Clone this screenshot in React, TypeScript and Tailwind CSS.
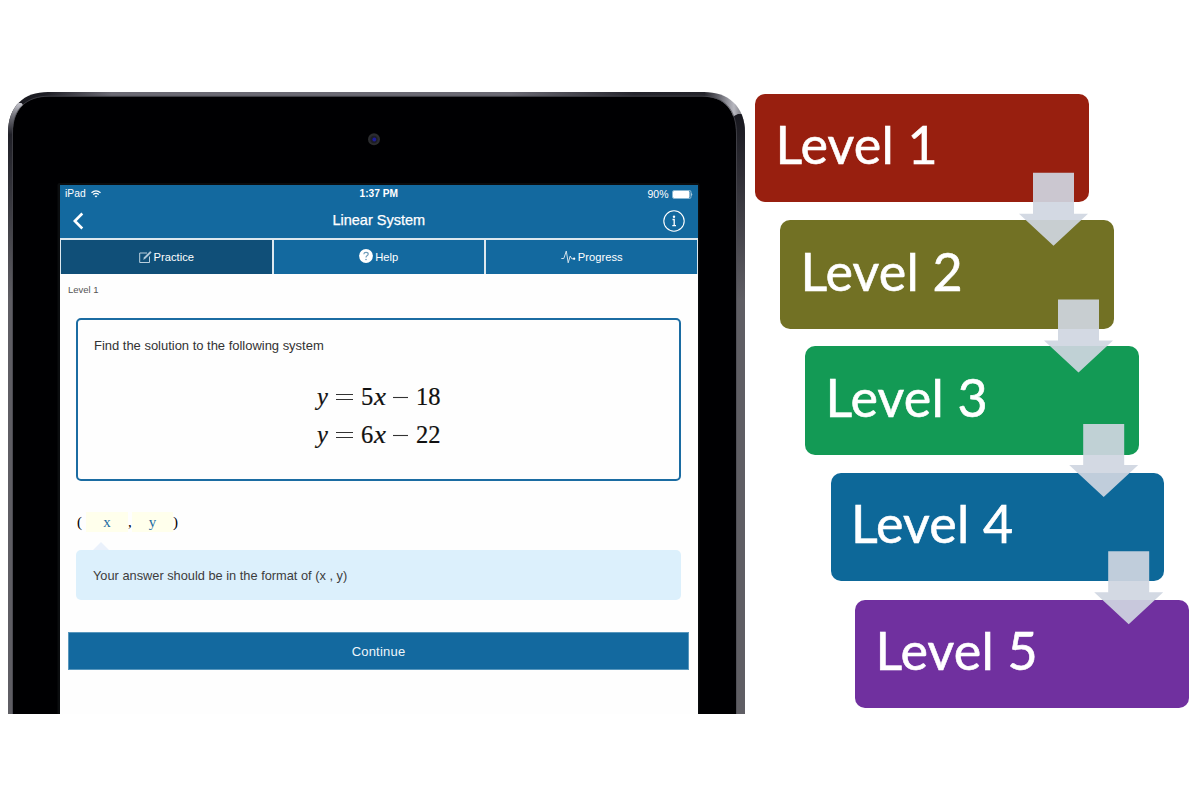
import { ReactNode } from "react";

type Level = { name: string; box: string };

const levels: Level[] = [
  { name: "Level 1", box: "bg-[#981f0f] h-[108px]" },
  { name: "Level 2", box: "bg-[#727124] ml-[25px] mt-[18px] h-[109px]" },
  { name: "Level 3", box: "bg-[#139a55] ml-[50px] mt-[17px] h-[109px]" },
  { name: "Level 4", box: "bg-[#0d6899] ml-[75.5px] mt-[18px] h-[108px]" },
  { name: "Level 5", box: "bg-[#70309f] ml-[100px] mt-[19px] h-[108px]" },
];

const arrows = [
  { x: 1053.5, y: 172.700 },
  { x: 1078.5, y: 299.5 },
  { x: 1103.700, y: 424 },
  { x: 1128.700, y: 551.300 },
];

function DeviceFrame() {
  return (
    <svg className="absolute inset-0" width="738" height="623" viewBox="8 91 738 623" aria-hidden="true">
      <defs>
        <linearGradient id="rim" x1="8" x2="745" y1="0" y2="0" gradientUnits="userSpaceOnUse">
          <stop offset="0" stopColor="#18181e" />
          <stop offset="0.05" stopColor="#1d1d24" />
          <stop offset="0.14" stopColor="#6b6a74" />
          <stop offset="0.68" stopColor="#6b6a74" />
          <stop offset="0.85" stopColor="#25252d" />
          <stop offset="0.945" stopColor="#24242b" />
          <stop offset="0.965" stopColor="#66666e" />
          <stop offset="0.985" stopColor="#b8b8c0" />
          <stop offset="1" stopColor="#66666c" />
        </linearGradient>
        <linearGradient id="leftEdge" x1="0" x2="0" y1="103" y2="300" gradientUnits="userSpaceOnUse">
          <stop offset="0" stopColor="#c8c8d0" />
          <stop offset="0.06" stopColor="#77777f" />
          <stop offset="0.16" stopColor="#202028" />
          <stop offset="0.45" stopColor="#34343b" />
          <stop offset="1" stopColor="#5f5e64" />
        </linearGradient>
        <linearGradient id="rightEdge" x1="0" x2="0" y1="114" y2="300" gradientUnits="userSpaceOnUse">
          <stop offset="0" stopColor="#17171e" />
          <stop offset="0.3" stopColor="#2d2c33" />
          <stop offset="1" stopColor="#5f5e64" />
        </linearGradient>
        <clipPath id="shell">
          <path d="M8 714V133C8 106 24 92 48 92H704C728 92 745 106 745 133V714Z" />
        </clipPath>
      </defs>
      <g clipPath="url(#shell)">
        <rect x="8" y="92" width="737" height="622" fill="url(#rim)" />
        <path d="M8 714V103H21.500L26 109V714Z" fill="url(#leftEdge)" />
        <path d="M728 714V119L738 114H745V714Z" fill="url(#rightEdge)" />
      </g>
      <path d="M12.800 714V133C12.800 108 27 96.500 49 96.500H702C724 96.500 736 110 736 134V714Z" fill="#000002" />
      <path d="M12.500 714V133C12.500 108 27 96.200 49 96.200H702C724 96.200 736.500 109 736.500 134V714" fill="none" stroke="#4a4a52" strokeWidth="0.700" />
      <rect x="57.500" y="183" width="642" height="535" rx="2" fill="#0b0d0f" />
      <circle cx="374" cy="139.300" r="6" fill="#2b2c2f" />
      <circle cx="374" cy="139.500" r="3.700" fill="#1d1d25" />
      <circle cx="374.300" cy="139.500" r="1.900" fill="#1c1c9c" />
    </svg>
  );
}

function StatusBar() {
  return (
    <div className="grid h-[18px] grid-cols-3 items-center px-[5px] pt-px text-[11px] leading-none">
      <div className="flex items-center gap-[5px]">
        <span className="text-[10.3px]">iPad</span>
        <svg width="10" height="8" viewBox="0 0 10 8" fill="none" stroke="white" strokeWidth="1.300">
          <path d="M.5 2.700Q5-1.100 9.500 2.700M2.200 4.600Q5 2.300 7.800 4.600" />
          <path d="M3.500 5.900Q5 4.900 6.500 5.900L5 7.600Z" fill="white" stroke="none" />
        </svg>
      </div>
      <div className="text-center text-[10.200px] font-bold">1:37 PM</div>
      <div className="flex items-center justify-end gap-[3px] text-[10.500px]">
        90%
        <svg width="21" height="9" viewBox="0 0 21 9">
          <rect x=".5" y=".5" width="18.500" height="8" rx="1.500" fill="none" stroke="#a8cbe0" strokeWidth=".8" />
          <rect x="1" y="1" width="16.500" height="7" rx="1" fill="white" />
          <path d="M19.500 2.800Q21 4.500 19.500 6.200Z" fill="white" />
        </svg>
      </div>
    </div>
  );
}

function Tab({ active, icon, children }: { active?: boolean; icon: ReactNode; children: ReactNode }) {
  return (
    <div className={`flex h-[34px] flex-1 items-center justify-center text-[11.2px] ${active ? "bg-[#104f78]" : "bg-[#13699f]"}`}>
      {icon}
      <span>{children}</span>
    </div>
  );
}

function Equation({ coef, constant }: { coef: string; constant: string }) {
  return (
    <div className="flex h-[38px] items-center font-['Liberation_Serif',serif] text-[24.500px] leading-none text-[#111] [-webkit-text-stroke:0.200px_#111]">
      <i className="w-[19px]">y</i>
      <svg width="17" height="10" className="mr-[8px]"><path d="M0 2.500H17M0 7.500H17" stroke="#333" strokeWidth="1.100" /></svg>
      <span className="w-[12.500px]">{coef}</span>
      <i className="w-[19.500px] origin-left scale-x-110">x</i>
      <svg width="16" height="10" className="mr-[7px]"><path d="M0 5.500H15" stroke="#333" strokeWidth="1.100" /></svg>
      <span>{constant}</span>
    </div>
  );
}

export default function App() {
  return (
    <div className="relative flex h-[800px] w-[1200px] overflow-hidden bg-white pl-2 font-['Liberation_Sans',Arial,sans-serif]">
      <div className="relative mt-[91px] h-[623px] w-[738px] shrink-0 overflow-hidden pl-[52px] pt-[94px]">
        <DeviceFrame />
        <div className="relative flex h-[529px] w-[637.500px] flex-col bg-[#fefefe]">
          <header className="h-[53px] bg-[#13699f] text-white">
            <StatusBar />
            <div className="flex h-[35px] items-center justify-between px-[13px]">
              <svg width="22" height="18" viewBox="0 0 22 18" fill="none" stroke="white" strokeWidth="2.600"><path d="M9.300 1.500L1.800 9L9.300 16.500" /></svg>
              <h1 className="text-[14.500px] font-medium [-webkit-text-stroke:0.250px_white]">Linear System</h1>
              <svg width="22" height="22" viewBox="0 0 22 22" fill="none" stroke="white">
                <circle cx="11" cy="11" r="10.200" strokeWidth="1.100" />
                <circle cx="11" cy="6.700" r="1.200" fill="white" stroke="none" />
                <path d="M9.500 9.500H11.200V15.500M9.300 15.700H13" strokeWidth="1.300" />
              </svg>
            </div>
          </header>
          <nav className="flex h-[36px] gap-[2px] bg-[#dce8ef] px-px pt-[2px] text-white">
            <Tab active icon={<svg width="13" height="13" viewBox="0 0 13 13" className="mr-[2px]" fill="none" stroke="#b9cfdd"><path d="M8 2H.7V11.500H10.500V5.500" /><path d="M4.500 8.500L5.200 6.200L11.300.3L12.400 1.500L6.300 7.600Z" fill="#b9cfdd" strokeWidth=".3" /></svg>}>Practice</Tab>
            <Tab icon={<svg width="14" height="14" viewBox="0 0 14 14" className="mb-[2px] mr-[2px]"><circle cx="7" cy="7" r="6.900" fill="white" /><path d="M4.800 5.200Q5 3.300 7 3.300Q9.200 3.300 9.200 5Q9.200 6.100 8 6.800Q7 7.400 7 8.600" fill="none" stroke="#6e9cba" strokeWidth="1.200" /><circle cx="7" cy="10.500" r=".8" fill="#6e9cba" /></svg>}>Help</Tab>
            <Tab icon={<svg width="15" height="14" viewBox="0 0 15 14" className="mb-px ml-px mr-[2px]" fill="none" stroke="#d1e1eb" strokeWidth="1"><path d="M.3 8.500H2.800L5.300 1L7.200 12.800L9.200 6L10.800 8.800H14" /><circle cx="13.200" cy="8.700" r="1.100" fill="white" stroke="none" /></svg>}>Progress</Tab>
          </nav>
          <div className="h-[21px] pl-2 pt-[10px] text-[9.500px] leading-3 text-[#555]">Level 1</div>
          <section className="ml-4 mt-[23px] flex h-[163px] w-[605px] shrink-0 flex-col rounded-[5px] border-2 border-[#1b6ca2] px-4 pt-[18px]">
            <p className="text-[13px] leading-4 tracking-[-0.020px] text-[#333]">Find the solution to the following system</p>
            <div className="mt-[24px] pl-[223px]">
              <Equation coef="5" constant="18" />
              <Equation coef="6" constant="22" />
            </div>
          </section>
          <div className="ml-[17px] mt-[31px] flex h-5 shrink-0 items-center font-['Liberation_Serif',serif] text-[15px] leading-5 text-black">
            <span className="w-[9px]">(</span>
            <span className="w-[42px] bg-[#ffffec] text-center text-[#1b6ca2]">x</span>
            <span className="w-[4px]">,</span>
            <span className="w-[41px] bg-[#ffffec] text-center text-[#1b6ca2]">y</span>
            <span>)</span>
          </div>
          <svg width="16" height="8" viewBox="0 0 16 8" className="ml-[33px] mt-[10px] shrink-0"><path d="M0 8L8 0L16 8Z" fill="#eaf1fb" /></svg>
          <div className="ml-4 flex h-[50px] w-[605px] shrink-0 items-center rounded-[5px] bg-[#dcf0fc] px-[17px] pt-px text-[12.800px] text-[#3c3c3c]">Your answer should be in the format of (x , y)</div>
          <div className="ml-2 mt-8 flex h-[38px] w-[621px] shrink-0 items-center justify-center border border-[#5897bd] bg-[#13699f] pt-px text-[13px] tracking-[0.200px] text-[#eef6fb]">Continue</div>
        </div>
      </div>
      <div className="ml-[9.400px] mt-[94px] flex flex-col">
        {levels.map((l) => (
          <div key={l.name} className={`flex w-[333.500px] shrink-0 items-center rounded-[10px] pb-[8px] pl-[20px] ${l.box}`}>
            <span className="whitespace-nowrap font-['Lato',sans-serif] text-[52px] leading-none tracking-[0.200px] text-white [-webkit-text-stroke:0.600px_white]">{l.name}</span>
          </div>
        ))}
      </div>
      <svg className="pointer-events-none absolute inset-0" width="1200" height="800" aria-hidden="true">
        {arrows.map((a) => (
          <path key={a.x} transform={`translate(${a.x} ${a.y})`} d="M-20.500 0H20.500V41H34.500L0 73L-34.500 41H-20.500Z" fill="#cfd6e1" fillOpacity="0.920" />
        ))}
      </svg>
    </div>
  );
}
